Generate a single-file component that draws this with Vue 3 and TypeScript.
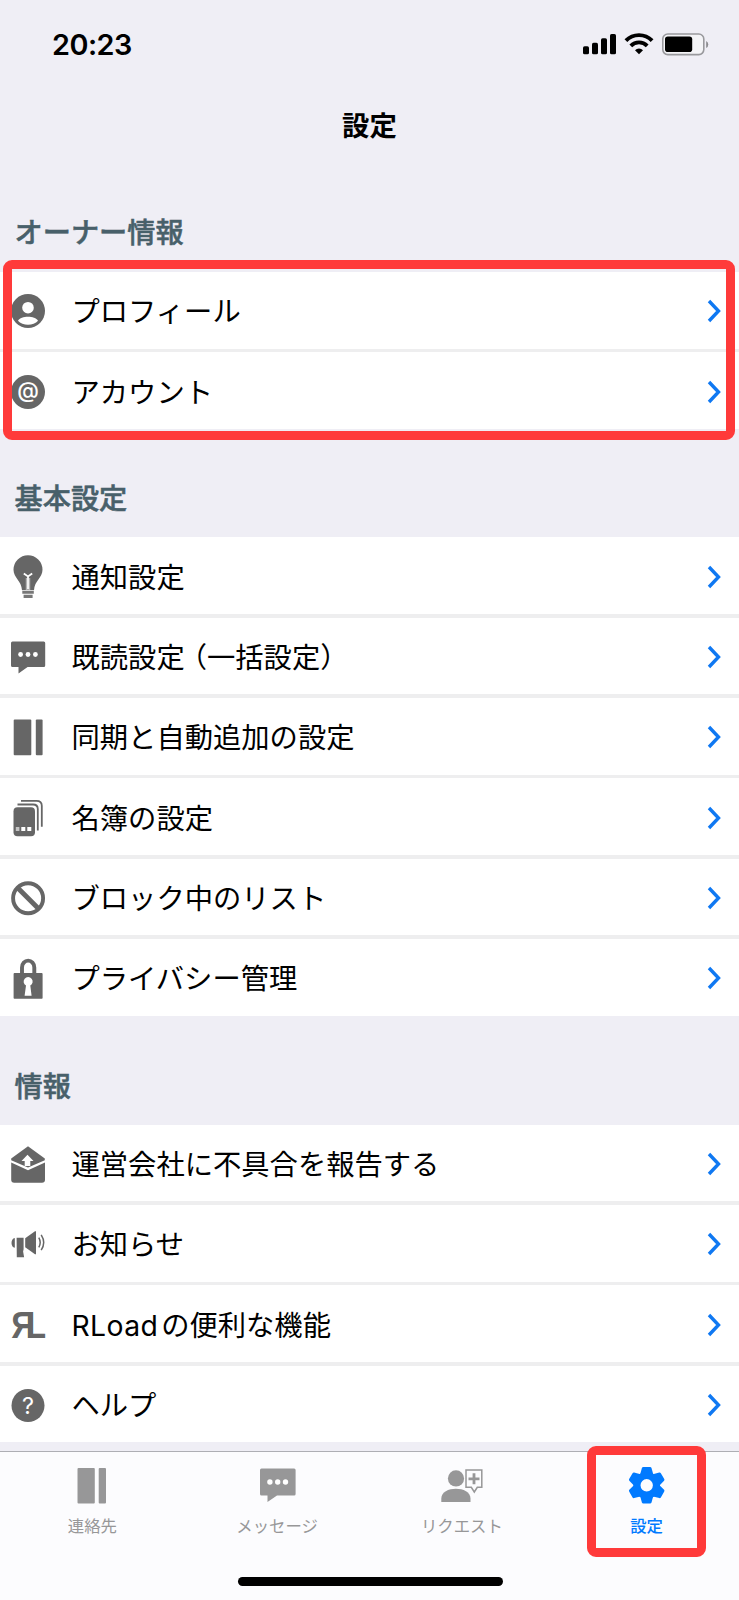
<script setup lang="ts">
interface Row {
  icon: string
  latin?: string
  label: string
  note?: string
}
interface Section {
  id: string
  title: string
  rows: Row[]
  highlighted?: boolean
}
interface Tab {
  icon: string
  label: string
  active?: boolean
}

const sections: Section[] = [
  {
    id: 'owner',
    title: 'オーナー情報',
    highlighted: true,
    rows: [
      { icon: 'profile', label: 'プロフィール' },
      { icon: 'account', label: 'アカウント' },
    ],
  },
  {
    id: 'basic',
    title: '基本設定',
    rows: [
      { icon: 'bulb', label: '通知設定' },
      { icon: 'chat', label: '既読設定', note: '（一括設定）' },
      { icon: 'book', label: '同期と自動追加の設定' },
      { icon: 'cards', label: '名簿の設定' },
      { icon: 'block', label: 'ブロック中のリスト' },
      { icon: 'lock', label: 'プライバシー管理' },
    ],
  },
  {
    id: 'info',
    title: '情報',
    rows: [
      { icon: 'mail', label: '運営会社に不具合を報告する' },
      { icon: 'horn', label: 'お知らせ' },
      { icon: 'logo', latin: 'RLoad', label: 'の便利な機能' },
      { icon: 'help', label: 'ヘルプ' },
    ],
  },
]

const tabs: Tab[] = [
  { icon: 'book', label: '連絡先' },
  { icon: 'chat', label: 'メッセージ' },
  { icon: 'request', label: 'リクエスト' },
  { icon: 'gear', label: '設定', active: true },
]
</script>

<template>
  <div class="screen">
    <header class="status">
      <span class="time">20:23</span>
      <svg class="status-icons" width="128" height="24" viewBox="0 0 128 24">
        <rect x="1" y="13.3" width="6" height="8" rx="1.6" />
        <rect x="10" y="9.8" width="6" height="11.5" rx="1.6" />
        <rect x="19" y="5.2" width="6" height="16.1" rx="1.6" />
        <rect x="28" y="1" width="6" height="20.3" rx="1.6" />
        <g fill="none" stroke="#000" stroke-width="3.9">
          <path d="M43.9 7.6a18.4 18.4 0 0 1 26.2 0" />
          <path d="M48.8 12.8a11.6 11.6 0 0 1 16.4 0" />
        </g>
        <path d="M57 21.2l-4-4a5.8 5.8 0 0 1 8 0z" />
        <rect x="80.8" y="1" width="41" height="20.6" rx="5" fill="#f4f4f7" stroke="#99999d" stroke-width="1.6" />
        <rect x="83" y="3.5" width="27.2" height="15.5" rx="2.8" />
        <path d="M124.2 8a4 4 0 0 1 0 7z" fill="#8b8b8f" />
      </svg>
    </header>
    <h1 class="title">設定</h1>

    <main class="content">
      <section v-for="section in sections" :key="section.id" :class="['section', section.id]">
        <h2 class="heading">{{ section.title }}</h2>
        <div class="list">
          <div v-for="row in section.rows" :key="row.icon" class="row">
            <svg class="icon" width="36" height="46" viewBox="0 0 36 46">
              <template v-if="row.icon === 'profile'">
                <circle cx="18" cy="24" r="17" />
                <circle cx="18" cy="20.7" r="5.8" fill="#fff" />
                <path d="M8 33.8c3-5.4 17-5.4 20 0c-4.5 5.2-15.5 5.2-20 0z" fill="#fff" />
              </template>
              <template v-else-if="row.icon === 'account'">
                <circle cx="18" cy="24" r="17" />
                <text class="at" x="18" y="30" text-anchor="middle">@</text>
              </template>
              <template v-else-if="row.icon === 'bulb'">
                <path d="M18 2.3a14.5 14.5 0 0 1 14.5 14.5c0 8-8 11-8.5 20.4H12c-.5-9.400-8.500-12.400-8.500-20.400A14.500 14.500 0 0 1 18 2.300z" />
                <path d="M13.800 20.500l4.200 3 4.200-3M18 23.500v13" fill="none" stroke="#fff" stroke-width="1.800" />
                <path d="M16.300 25v12M19.700 25v12" fill="none" stroke="#ddd" stroke-width=".8" />
                <path d="M12.300 38h11.500v2.800H12.300zM13.600 41.800h9v3.200h-9z" fill="#777" />
              </template>
              <template v-else-if="row.icon === 'chat'">
                <path d="M2.500 8.500h31.200a1.500 1.500 0 0 1 1.500 1.500v22.500a1.500 1.500 0 0 1-1.500 1.500H17.600L8.500 40.500V34h-6A1.500 1.500 0 0 1 1 32.500V10a1.500 1.500 0 0 1 1.500-1.500z" />
                <g fill="#fff"><circle cx="10.600" cy="21.500" r="2.400" /><circle cx="18" cy="21.500" r="2.400" /><circle cx="25.400" cy="21.500" r="2.400" /></g>
              </template>
              <template v-else-if="row.icon === 'book'">
                <rect x="3.700" y="6.500" width="17.600" height="35.800" rx="1" />
                <rect x="25.800" y="6.500" width="6.800" height="35.800" rx="1" />
              </template>
              <template v-else-if="row.icon === 'cards'">
                <rect x="3.500" y="13.300" width="21.500" height="29" rx="4" />
                <g fill="none" stroke="#666" stroke-width="1.800">
                  <path d="M7.500 10.500h15.500c3 0 4.800 1.500 4.800 4.500v21.500" />
                  <path d="M11 6.800h15.500c3.500 0 5.300 1.500 5.300 5v21" />
                </g>
                <path d="M11.300 33h4v4h-4zM17.300 33h4v4h-4z" fill="#fff" />
                <path d="M5.800 33h3.600v4H5.800z" fill="#c4c4c4" />
              </template>
              <template v-else-if="row.icon === 'block'">
                <g fill="none" stroke="#666">
                  <circle cx="18.100" cy="24.200" r="15" stroke-width="3.900" />
                  <path d="M7.600 13.700l21 21" stroke-width="4.800" />
                </g>
              </template>
              <template v-else-if="row.icon === 'lock'">
                <rect x="3.600" y="19.100" width="29" height="25.600" rx=".8" />
                <path d="M12 20v-6.500a6.100 6.800 0 0 1 12.300 0V20" fill="none" stroke="#666" stroke-width="3.900" />
                <path d="M16 31.500a4.500 4.500 0 1 1 4.300 0l1.300 10.300h-7z" fill="#fff" />
              </template>
              <template v-else-if="row.icon === 'mail'">
                <path d="M18 6.300L34.800 18.500v1.800L18 27.500 1.200 20.300v-1.800z" />
                <path d="M1.200 22.500L18 30.200l17-7.700v17.300a3 3 0 0 1-3 3H4.200a3 3 0 0 1-3-3z" />
                <path d="M17.500 14.700l6 6.200h-3.200v5.200h-5.600v-5.200h-3.200z" fill="#fff" />
              </template>
              <template v-else-if="row.icon === 'horn'">
                <path d="M4.800 18v9.800c-4.400-.5-4.400-9.300 0-9.800z" />
                <path d="M6.600 17.700h7v11.600l-.5 2.200 1 5.700H6.800z" />
                <path d="M15.200 18.300L25 11.200h1v23h-1l-9.800-7z" />
                <path d="M28.800 17.600q2.800 4.900 0 9.800M31.200 14.800q5 7.700 0 15.400" fill="none" stroke="#666" stroke-width="1.500" />
              </template>
              <template v-else-if="row.icon === 'logo'">
                <g transform="translate(1.200 37.300) scale(.9 1)"><text class="mark">ЯL</text></g>
              </template>
              <template v-else-if="row.icon === 'help'">
                <circle cx="18" cy="24.500" r="16.500" />
                <text class="question" x="18" y="33" text-anchor="middle">?</text>
              </template>
            </svg>
            <span class="label"><span v-if="row.latin" class="latin">{{ row.latin }}</span>{{ row.label }}<span v-if="row.note" class="note">{{ row.note }}</span></span>
            <svg class="chevron" width="16" height="26" viewBox="0 0 16 26">
              <path d="M3 3l9.500 10L3 23" />
            </svg>
          </div>
          <div v-if="section.highlighted" class="mark-list"></div>
        </div>
      </section>
    </main>

    <nav class="tabs">
      <div v-for="tab in tabs" :key="tab.label" :class="['tab', { active: tab.active }]">
        <svg class="tab-icon" width="44" height="40" viewBox="0 0 44 40">
          <template v-if="tab.icon === 'book'">
            <rect x="7.500" y="2" width="17.300" height="35.600" rx="1" />
            <rect x="28.700" y="2" width="7.300" height="35.600" rx="1" />
          </template>
          <template v-else-if="tab.icon === 'chat'">
            <path d="M6.500 2.500h32.600a1.500 1.500 0 0 1 1.500 1.500v24a1.500 1.500 0 0 1-1.500 1.500H22L12.500 36v-6.500h-6A1.500 1.500 0 0 1 5 28V4a1.500 1.500 0 0 1 1.500-1.500z" />
            <g fill="#fff"><circle cx="14.900" cy="16" r="2.700" /><circle cx="22.700" cy="16" r="2.700" /><circle cx="30.500" cy="16" r="2.700" /></g>
          </template>
          <template v-else-if="tab.icon === 'request'">
            <circle cx="16" cy="12.400" r="8.100" />
            <path d="M1.300 36v-3.500C1.300 19.500 30.500 19.500 30.500 32.500V36z" />
            <path d="M26 4h15.800v17.300H37.300L34.300 26l-3-4.700H26z" fill="#fcfcfe" stroke="#979798" stroke-width="1.500" />
            <path d="M34 7.300v11M28.500 12.800h11" stroke="#979798" stroke-width="2.800" />
          </template>
          <template v-else>
            <g transform="translate(21.700 19.300)">
              <g v-for="n in 6" :key="n" :transform="`rotate(${n * 60})`">
                <path d="M-6.800-10l2-7.300q.4-1 1.400-1H3.400q1 0 1.400 1L6.800-10z" />
              </g>
              <path fill-rule="evenodd" d="M0-13.300a13.300 13.300 0 1 1 0 26.600a13.300 13.300 0 1 1 0-26.600zM0-6.200a6.200 6.200 0 1 0 0 12.400a6.200 6.200 0 1 0 0-12.400z" />
            </g>
          </template>
        </svg>
        <span class="tab-label">{{ tab.label }}</span>
        <div v-if="tab.active" class="mark-tab"></div>
      </div>
      <div class="home"></div>
    </nav>
  </div>
</template>

<style>
body {
  margin: 0;
  background: #efeef5;
}
</style>

<style scoped>
.screen {
  display: flex;
  flex-direction: column;
  width: 739px;
  height: 1600px;
  overflow: hidden;
  background: #efeef5;
  color: #000;
  font-family: Inter, "Noto Sans CJK JP", sans-serif;
}
.status {
  display: flex;
  justify-content: space-between;
  align-items: center;
  box-sizing: border-box;
  height: 90px;
  padding: 0 29px 0 52px;
}
.time {
  font-size: 28.800px;
  font-weight: 600;
  line-height: 36px;
  letter-spacing: -0.500px;
}
.title {
  box-sizing: border-box;
  height: 70px;
  margin: 0;
  padding-top: 1px;
  line-height: 70px;
  font-size: 27.400px;
  font-weight: 700;
  text-align: center;
}
.content {
  flex: 1;
}
.heading {
  display: flex;
  align-items: center;
  box-sizing: border-box;
  margin: 0;
  padding: 0 14.500px;
  font-size: 28.200px;
  font-weight: 500;
  line-height: 40px;
  color: #48606a;
  -webkit-text-stroke: 0.500px #48606a;
}
.owner .heading {
  height: 111.800px;
  padding-top: 34px;
}
.basic .heading {
  height: 108.400px;
  padding-top: 31px;
}
.info .heading {
  height: 108.900px;
  padding-top: 34px;
}
.list {
  position: relative;
  display: flex;
  flex-direction: column;
  gap: 3.600px;
  background: #eeeeef;
}
.row {
  display: flex;
  align-items: center;
  height: 76.750px;
  padding: 0 17px 0 10px;
  background: #fff;
}
.icon {
  flex: none;
  fill: #666;
}
.label {
  flex: 1;
  padding: 4px 0 0 25.500px;
  font-size: 28.300px;
  line-height: 40px;
  white-space: nowrap;
}
.note {
  margin-left: -6px;
}
.latin {
  margin-right: 3px;
  letter-spacing: 0.400px;
}
.chevron {
  margin-top: 2px;
  fill: none;
  stroke: #0f78f2;
  stroke-width: 3.400;
}
.at {
  font: 500 22px Inter, sans-serif;
  fill: #fff;
}
.question {
  font: 400 23.500px Inter, sans-serif;
  fill: #fff;
}
.mark {
  font: 700 37px "Liberation Sans", sans-serif;
  letter-spacing: -10.500px;
  fill: #666;
}
.mark-list {
  position: absolute;
  left: 3px;
  right: 4px;
  top: -12px;
  bottom: -11px;
  border: 9px solid #ff3a3a;
  border-radius: 9px;
}
.tabs {
  position: relative;
  display: flex;
  box-sizing: border-box;
  height: 149px;
  border-top: 1px solid #aeaeb4;
  background: #fcfcfe;
}
.tab {
  position: relative;
  display: flex;
  flex: 1;
  flex-direction: column;
  align-items: center;
  padding-top: 14px;
  color: #979798;
  fill: #979798;
}
.tab.active {
  color: #007aff;
  fill: #007aff;
}
.tab-label {
  margin-top: 8px;
  font-size: 16.400px;
  line-height: 24px;
  white-space: nowrap;
}
.active .tab-label {
  font-weight: 500;
}
.mark-tab {
  position: absolute;
  left: 32.300px;
  top: -6.500px;
  box-sizing: border-box;
  width: 119px;
  height: 111px;
  border: 9px solid #ff3a3a;
  border-radius: 9px;
}
.home {
  position: absolute;
  left: 237.500px;
  bottom: 14px;
  width: 265px;
  height: 9px;
  border-radius: 5px;
  background: #000;
}
</style>
